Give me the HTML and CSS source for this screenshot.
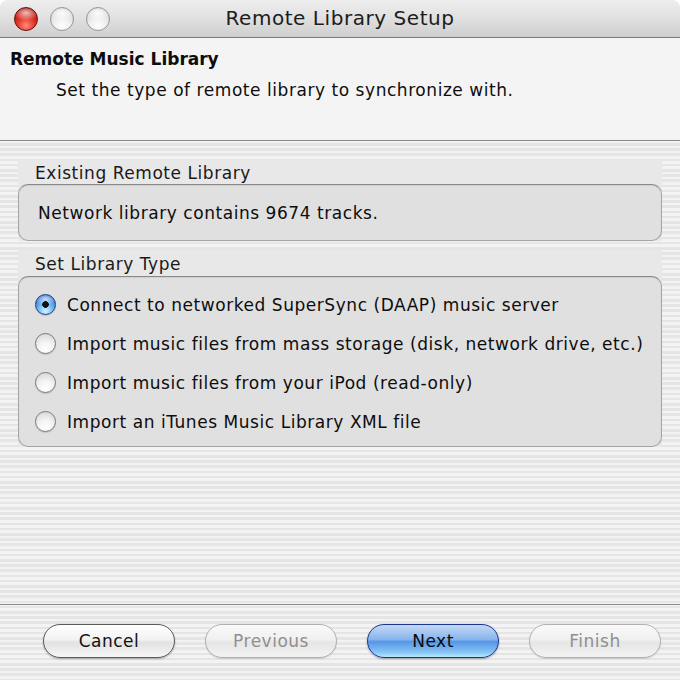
FILE: index.html
```html
<!DOCTYPE html>
<html>
<head>
<meta charset="utf-8">
<link rel="stylesheet" href="styles.css">
</head>
<body>
<div class="window">
  <div class="titlebar">
    <div class="lights">
      <span class="light red"></span>
      <span class="light grey"></span>
      <span class="light grey"></span>
    </div>
    <div class="title">Remote Library Setup</div>
  </div>
  <div class="header">
    <div class="h-title">Remote Music Library</div>
    <div class="h-sub">Set the type of remote library to synchronize with.</div>
  </div>
  <div class="content">
    <div class="section">
      <div class="sec-label">Existing Remote Library</div>
      <div class="box box-info">Network library contains 9674 tracks.</div>
    </div>
    <div class="section sec2">
      <div class="sec-label">Set Library Type</div>
      <div class="box box-radios">
        <div class="radio-row"><span class="radio on"></span><span>Connect to networked SuperSync (DAAP) music server</span></div>
        <div class="radio-row"><span class="radio"></span><span>Import music files from mass storage (disk, network drive, etc.)</span></div>
        <div class="radio-row"><span class="radio"></span><span>Import music files from your iPod (read-only)</span></div>
        <div class="radio-row"><span class="radio"></span><span>Import an iTunes Music Library XML file</span></div>
      </div>
    </div>
  </div>
  <div class="footer">
    <div class="btn">Cancel</div>
    <div class="btn disabled">Previous</div>
    <div class="btn default">Next</div>
    <div class="btn disabled">Finish</div>
  </div>
</div>
</body>
</html>
```
FILE: styles.css
```css
* { box-sizing: border-box; }
html, body { margin: 0; padding: 0; }
body {
  width: 680px;
  height: 680px;
  overflow: hidden;
  font-family: "DejaVu Sans", "Liberation Sans", sans-serif;
  font-size: 17px;
  letter-spacing: 0.55px;
  color: #0d0d0d;
  background: #fff;
}
.window {
  width: 680px;
  height: 680px;
  display: flex;
  flex-direction: column;
  background: repeating-linear-gradient(to bottom, #f3f3f3 0px, #f3f3f3 2.6px, #e5e5e5 2.6px, #e5e5e5 5.2px);
  border-radius: 8px 8px 0 0;
  overflow: hidden;
}
.titlebar {
  height: 38px;
  flex: none;
  display: flex;
  align-items: center;
  position: relative;
  background: linear-gradient(to bottom, #eeeeee 0%, #e3e3e3 40%, #cfcfcf 100%);
  border-bottom: 1px solid #7c7c7c;
}
.lights {
  display: flex;
  gap: 12px;
  padding-left: 14px;
}
.light {
  width: 24px;
  height: 24px;
  border-radius: 50%;
  display: block;
}
.light.red {
  background:
    radial-gradient(ellipse 60% 35% at 50% 22%, rgba(255,255,255,0.7) 0%, rgba(255,255,255,0) 100%),
    radial-gradient(circle at 50% 80%, #ff8a7a 0%, #e23a2c 40%, #b8140c 72%, #840a06 100%);
  border: 1px solid #6a0e0a;
}
.light.grey {
  background:
    radial-gradient(ellipse 60% 35% at 50% 22%, rgba(255,255,255,0.9) 0%, rgba(255,255,255,0) 100%),
    radial-gradient(circle at 50% 80%, #ffffff 0%, #eeeeee 40%, #d4d4d4 80%, #c2c2c2 100%);
  border: 1px solid #969696;
}
.title {
  position: absolute;
  left: 0;
  right: 0;
  top: 6px;
  text-align: center;
  font-size: 20px;
  letter-spacing: 0.55px;
  color: #1c1c1c;
}
.header {
  height: 103px;
  flex: none;
  background: #f4f4f4;
  border-bottom: 1px solid #8a8a8a;
  padding: 10px 10px 0;
}
.h-title {
  font-weight: bold;
  font-size: 17px;
  letter-spacing: 0;
  line-height: 22px;
}
.h-sub {
  margin-top: 9px;
  padding-left: 46px;
  line-height: 22px;
}
.content {
  height: 464px;
  flex: none;
  padding: 19px 18px 0;
  border-bottom: 1px solid #8c8c8c;
}
.section {
  background: #e8e8e8;
}
.sec2 {
  margin-top: 9px;
}
.sec-label {
  height: 24px;
  padding-left: 17px;
  line-height: 26px;
  color: #1a1a1a;
}
.sec2 .sec-label {
  height: 26px;
  line-height: 28px;
}
.box {
  border: 1px solid #a4a4a4;
  border-top-color: #888888;
  border-radius: 10px;
  background: #e0e0e0;
  box-shadow: inset 0 1px 1px rgba(0,0,0,0.08);
}
.box-info {
  height: 57px;
  padding-left: 19px;
  padding-top: 1px;
  line-height: 55px;
}
.box-radios {
  height: 171px;
  padding: 8px 0 0 16px;
}
.radio-row {
  height: 39px;
  display: flex;
  align-items: center;
  gap: 11px;
}
.radio {
  width: 21px;
  height: 21px;
  border-radius: 50%;
  flex: none;
  border: 1px solid #7a7a7a;
  background: radial-gradient(circle at 50% 80%, #ffffff 0%, #f4f4f4 40%, #dcdcdc 80%, #cfcfcf 100%);
  box-shadow: 0 1px 1px rgba(0,0,0,0.15);
}
.radio.on {
  border-color: #1f3a86;
  background:
    radial-gradient(circle at 50% 50%, #111 0, #111 3px, transparent 3.6px),
    radial-gradient(ellipse 60% 35% at 50% 22%, rgba(255,255,255,0.7) 0%, rgba(255,255,255,0) 100%),
    radial-gradient(circle at 50% 85%, #d8f2ff 0%, #7cc2f6 35%, #3680dc 70%, #2456b0 100%);
}
.footer {
  flex: 1;
  display: flex;
  justify-content: flex-end;
  gap: 30px;
  padding: 19px 19px 0 0;
}
.btn {
  width: 132px;
  height: 34px;
  border-radius: 17px;
  text-align: center;
  line-height: 32px;
  font-size: 17px;
  letter-spacing: 0.5px;
  color: #111;
  border: 1px solid #5a5a5a;
  background: linear-gradient(to bottom, #ffffff 0%, #f2f2f2 45%, #e2e2e2 55%, #f6f6f6 100%);
  box-shadow: 0 1px 2px rgba(0,0,0,0.3);
}
.btn.disabled {
  color: #8f8f8f;
  border-color: #b0b0b0;
  background: linear-gradient(to bottom, #fafafa 0%, #f0f0f0 45%, #e6e6e6 55%, #f2f2f2 100%);
  box-shadow: 0 1px 1px rgba(0,0,0,0.12);
}
.btn.default {
  border-color: #1c3590;
  color: #0a0a0a;
  background: linear-gradient(to bottom, #c4d8f6 0%, #88b4ec 45%, #5596e6 52%, #86c4f6 85%, #b4eaff 100%);
  box-shadow: 0 1px 2px rgba(0,0,0,0.35);
}
```
